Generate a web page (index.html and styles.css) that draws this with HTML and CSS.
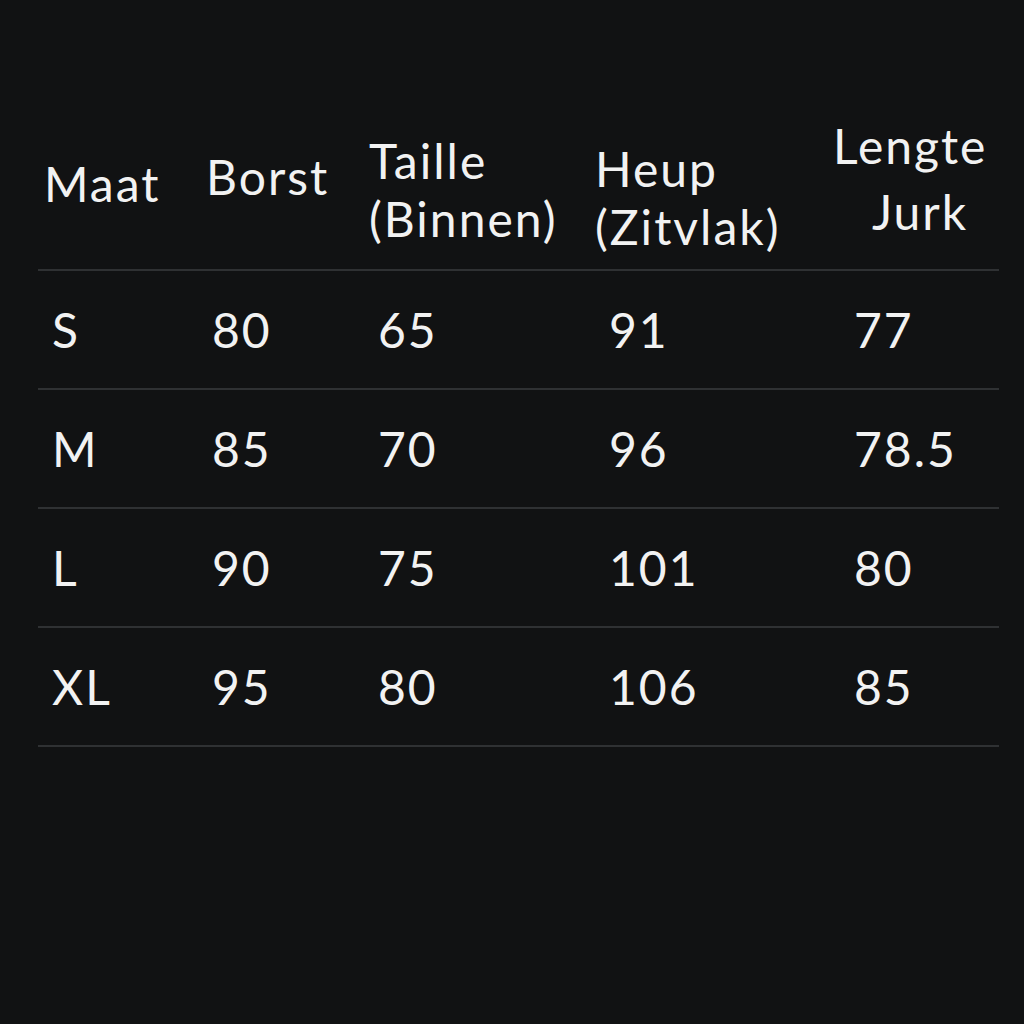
FILE: index.html
```html
<!DOCTYPE html>
<html lang="nl">
<head>
<meta charset="utf-8">
<title>Maattabel</title>
<link rel="stylesheet" href="styles.css">
</head>
<body>
<div class="table">
  <div class="row head">
    <div class="cell h1">Maat</div>
    <div class="cell h2">Borst</div>
    <div class="cell h3">Taille<br>(Binnen)</div>
    <div class="cell h4">Heup<br>(Zitvlak)</div>
    <div class="cell h5">Lengte<br><span class="sub">Jurk</span></div>
  </div>
  <div class="row">
    <div class="cell c1">S</div><div class="cell c2">80</div><div class="cell c3">65</div><div class="cell c4">91</div><div class="cell c5">77</div>
  </div>
  <div class="row">
    <div class="cell c1">M</div><div class="cell c2">85</div><div class="cell c3">70</div><div class="cell c4">96</div><div class="cell c5">78.5</div>
  </div>
  <div class="row">
    <div class="cell c1">L</div><div class="cell c2">90</div><div class="cell c3">75</div><div class="cell c4">101</div><div class="cell c5">80</div>
  </div>
  <div class="row">
    <div class="cell c1">XL</div><div class="cell c2">95</div><div class="cell c3">80</div><div class="cell c4">106</div><div class="cell c5">85</div>
  </div>
</div>
</body>
</html>
```
FILE: styles.css
```css
html, body {
  margin: 0;
  padding: 0;
  background: #111213;
}
body {
  width: 1024px;
  height: 1024px;
  color: #f2f2f2;
  font-family: Lato, "Noto Sans", sans-serif;
}
.table {
  padding: 110px 0 0 38px;
  width: 961px;
}
.row {
  display: grid;
  grid-template-columns: 162px 162px 228px 240px 169px;
  height: 117px;
  align-items: center;
  border-bottom: 2px solid #2f3133;
  font-size: 48px;
  letter-spacing: 2px;
}
.row.head {
  height: 159px;
  align-items: start;
  line-height: 58px;
}
.cell { white-space: nowrap; }
.c1 { padding-left: 14px; }
.c2 { padding-left: 12px; }
.c3 { padding-left: 16px; }
.c4 { padding-left: 19px; }
.c5 { padding-left: 24px; }
.h1 { padding: 45px 0 0 6px; }
.h2 { padding: 38px 0 0 6px; }
.h3 { padding: 22px 0 0 7px; }
.h4 { padding: 30px 0 0 5px; }
.h5 { padding: 3px 0 0 3px; line-height: 66px; }
.sub { margin-left: 39px; }
```
